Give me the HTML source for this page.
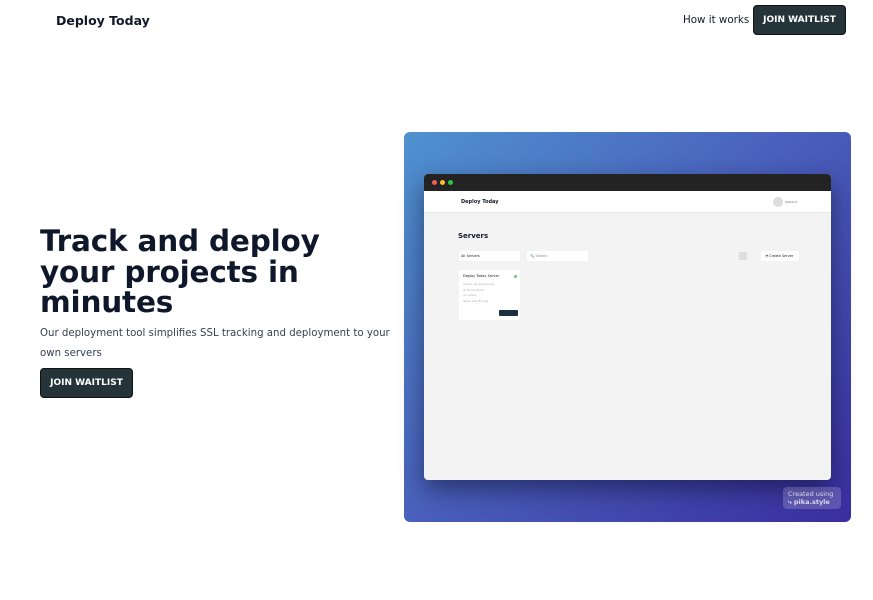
<!DOCTYPE html>
<html><head><style>
*{margin:0;padding:0;box-sizing:border-box}
body{width:873px;height:600px;background:#fff;font-family:"DejaVu Sans","Liberation Sans",sans-serif;position:relative;overflow:hidden;color:#111827}
.a{position:absolute}
.btn{background:#243438;color:#fff;font-weight:bold;font-size:9px;border-radius:4px;display:flex;align-items:center;justify-content:center;border:1px solid #111}
</style></head><body>
<div class="a" style="left:56px;top:13px;font-size:12.5px;font-weight:bold">Deploy Today</div>
<div class="a" style="left:683px;top:14px;font-size:10.3px">How it works</div>
<div class="a btn" style="left:753px;top:5px;width:93px;height:30px">JOIN WAITLIST</div>
<div class="a" style="left:40px;top:226px;font-size:29.5px;font-weight:bold;line-height:30.5px;width:345px;color:#0f172a;letter-spacing:-0.2px">Track and deploy your projects in minutes</div>
<div class="a" style="left:40px;top:324px;font-size:10.2px;line-height:20px;white-space:nowrap;color:#374151">Our deployment tool simplifies SSL tracking and deployment to your<br>own servers</div>
<div class="a btn" style="left:40px;top:368px;width:93px;height:30px">JOIN WAITLIST</div>

<div class="a" style="left:404px;top:132px;width:447px;height:390px;border-radius:6px;background:linear-gradient(135deg,#4f92cf 0%,#4a62bd 45%,#3a2ea0 100%)"></div>
<div class="a" style="left:424px;top:174px;width:407px;height:306px;border-radius:4px;overflow:hidden;background:#f3f3f3;box-shadow:0 10px 25px rgba(0,0,20,.45)">
 <div style="height:17px;background:#232323;position:relative">
  <span class="a" style="left:8px;top:6px;width:5px;height:5px;border-radius:50%;background:#ef5f57"></span>
  <span class="a" style="left:16px;top:6px;width:5px;height:5px;border-radius:50%;background:#f8bd2e"></span>
  <span class="a" style="left:24px;top:6px;width:5px;height:5px;border-radius:50%;background:#29c840"></span>
 </div>
 <div style="height:22px;background:#fff;position:relative;border-bottom:1px solid #e8e8e8">
  <span class="a" style="left:37px;top:8px;font-size:5px;font-weight:bold">Deploy Today</span>
  <span class="a" style="left:349px;top:6px;width:10px;height:10px;border-radius:50%;background:#ddd"></span>
  <span class="a" style="left:361px;top:9px;font-size:3px;color:#555">Admin ▾</span>
 </div>
 <div class="a" style="left:34px;top:58px;font-size:7px;font-weight:bold">Servers</div>
 <div class="a" style="left:35px;top:77px;width:61px;height:10px;background:#fff;border-radius:2px;font-size:3.5px;padding:3px 2px">All Servers</div>
 <div class="a" style="left:103px;top:77px;width:61px;height:10px;background:#fff;border-radius:2px;font-size:3.5px;padding:3px 3px;color:#888">🔍 Search</div>
 <div class="a" style="left:315px;top:78px;width:8px;height:8px;background:#ddd;border-radius:1px"></div>
 <div class="a" style="left:337px;top:77px;width:38px;height:10px;background:#fff;border-radius:2px;font-size:3.5px;padding:3px 4px">◔ Create Server</div>
 <div class="a" style="left:35px;top:96px;width:61px;height:50px;background:#fff;border-radius:2px">
  <span class="a" style="left:4px;top:4px;font-size:3.5px">Deploy Today Server</span>
  <span class="a" style="right:3px;top:5px;width:3px;height:3px;border-radius:50%;background:#6c6"></span>
  <span class="a" style="left:4px;top:12px;font-size:2.5px;color:#aaa;line-height:5.5px">domain: api.deploy.today<br>ip: 64.227.00.00<br>os: Centos<br>Issuer: Let's Encrypt</span>
  <span class="a" style="left:40px;top:40px;width:19px;height:6px;background:#1e3040;border-radius:1px"></span>
 </div>
</div>
<div class="a" style="left:783px;top:487px;width:58px;height:22px;border-radius:4px;background:rgba(255,255,255,.18);font-size:6.5px;line-height:8px;color:#d8d8f0;padding:3px 5px;white-space:nowrap">Created using<br><b>⤷ pika.style</b></div>
</body></html>
